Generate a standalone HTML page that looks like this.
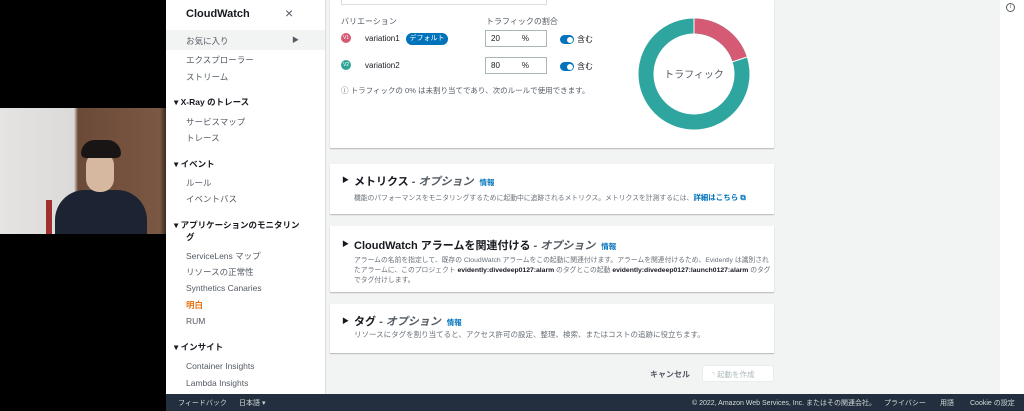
<!DOCTYPE html>
<html><head><meta charset="utf-8"><style>
*{margin:0;padding:0;box-sizing:border-box}
body{width:1024px;height:411px;overflow:hidden;position:relative;background:#000;font-family:"Liberation Sans","Noto Sans CJK JP",sans-serif;color:#16191f}
.abs{position:absolute}
.side{left:166px;top:0;width:160px;height:394px;background:#fff;border-right:1px solid #ddd}
.side div{position:absolute;left:20px;font-size:8.5px;color:#545b64;white-space:nowrap}
.side .h{left:8px;font-weight:bold;color:#16191f}
.main{left:326px;top:0;width:674px;height:394px;background:#f2f3f3}
.card{position:absolute;left:4px;width:444px;background:#fff;box-shadow:0 1px 1px rgba(0,0,0,.25)}
.t{position:absolute;font-size:8px;white-space:nowrap}
.ct{font-size:11px;font-weight:bold;left:24px}
.ct i{font-weight:bold;color:#545b64}
.info{color:#0073bb;font-size:7.5px;font-weight:bold;margin-left:6px}
.desc{font-size:6.8px;color:#687078;left:24px;line-height:10px}
.inp{position:absolute;width:62px;height:17px;border:1px solid #aab7b8;background:#fff;font-size:8px;padding:3px 5px}
.tog{position:absolute;width:14px;height:9px;border-radius:5px;background:#0073bb}
.tog:after{content:"";position:absolute;right:1.5px;top:1.5px;width:6px;height:6px;border-radius:50%;background:#fff}
.foot{left:166px;top:394px;width:858px;height:17px;background:#232f3e;color:#d5dbdb;font-size:7px}
.foot span{position:absolute;top:4px;white-space:nowrap}
</style></head><body>
<div class="abs" style="left:0;top:108px;width:166px;height:126px;background:linear-gradient(90deg,#e6e4e2 0,#dcdad8 74px,#6b4a38 78px,#7b5843 160px,#3a2a20 166px)"></div>
<div class="abs" style="left:55px;top:190px;width:92px;height:44px;background:#1c2332;border-radius:30px 30px 0 0"></div>
<div class="abs" style="left:86px;top:152px;width:28px;height:40px;background:#d6b7a0;border-radius:13px"></div>
<div class="abs" style="left:81px;top:140px;width:40px;height:18px;background:#1a1515;border-radius:18px 18px 6px 6px"></div>
<div class="abs" style="left:46px;top:200px;width:6px;height:34px;background:#a03030"></div>
<div class="abs side">
<div class="h" style="left:20px;top:8px;font-size:11px">CloudWatch</div>
<div style="left:119px;top:5px;font-size:14px;color:#545b64">×</div>
<div style="left:0;top:30px;width:159px;height:20px;background:#f2f3f3"></div>
<div style="top:35px">お気に入り</div><div style="left:126px;top:35px;font-size:7px">▶</div>
<div style="top:54px">エクスプローラー</div>
<div style="top:71px">ストリーム</div>
<div class="h" style="top:96px">▾ X-Ray のトレース</div>
<div style="top:116px">サービスマップ</div>
<div style="top:132px">トレース</div>
<div class="h" style="top:158px">▾ イベント</div>
<div style="top:177px">ルール</div>
<div style="top:193px">イベントバス</div>
<div class="h" style="top:219px">▾ アプリケーションのモニタリン</div>
<div class="h" style="left:20px;top:231px">グ</div>
<div style="top:250px">ServiceLens マップ</div>
<div style="top:266px">リソースの正常性</div>
<div style="top:283px">Synthetics Canaries</div>
<div style="top:299px;color:#ec7211;font-weight:bold">明白</div>
<div style="top:316px">RUM</div>
<div class="h" style="top:341px">▾ インサイト</div>
<div style="top:361px">Container Insights</div>
<div style="top:378px">Lambda Insights</div>
</div>
<div class="abs main">
<div class="card" style="top:0;height:148px">
 <div class="abs" style="left:11px;top:-1px;width:206px;height:6px;border:1px solid #ddd;border-top:0"></div>
 <div class="t" style="left:11px;top:16px;color:#545b64">バリエーション</div>
 <div class="t" style="left:156px;top:16px;color:#545b64">トラフィックの割合</div>
 <div class="abs" style="left:11px;top:33px;width:10px;height:10px;border-radius:50%;background:#d45b73;color:#fff;font-size:5px;text-align:center;line-height:10px">V1</div>
 <div class="t" style="left:35px;top:34px">variation1</div>
 <div class="abs" style="left:76px;top:33px;width:42px;height:12px;border-radius:6px;background:#0073bb;color:#fff;font-size:7px;text-align:center;line-height:12px">デフォルト</div>
 <div class="inp" style="left:155px;top:30px">20<span style="margin-left:22px">%</span></div>
 <div class="tog" style="left:230px;top:35px"></div><div class="t" style="left:247px;top:34px">含む</div>
 <div class="abs" style="left:11px;top:60px;width:10px;height:10px;border-radius:50%;background:#2ea597;color:#fff;font-size:5px;text-align:center;line-height:10px">V2</div>
 <div class="t" style="left:35px;top:61px">variation2</div>
 <div class="inp" style="left:155px;top:57px">80<span style="margin-left:22px">%</span></div>
 <div class="tog" style="left:230px;top:62px"></div><div class="t" style="left:247px;top:61px">含む</div>
 <div class="t" style="left:11px;top:85px;color:#545b64;font-size:7.5px">ⓘ トラフィックの 0% は未割り当てであり、次のルールで使用できます。</div>
 <svg class="abs" style="left:308px;top:18px" width="112" height="112" viewBox="0 0 112 112">
  <circle cx="56" cy="56" r="48" fill="none" stroke="#2ea59f" stroke-width="15"/>
  <path d="M56 8 A48 48 0 0 1 101.65 41.17" fill="none" stroke="#d45b73" stroke-width="15"/>
  <line x1="56" y1="0" x2="56" y2="16" stroke="#fff" stroke-width="1"/>
  <line x1="109" y1="39" x2="94" y2="44" stroke="#fff" stroke-width="1"/>
  <text x="56" y="60" text-anchor="middle" font-size="10" fill="#545b64" font-family="Liberation Sans,Noto Sans CJK JP,sans-serif">トラフィック</text>
 </svg>
</div>
<div class="card" style="top:164px;height:50px">
 <div class="t" style="left:12px;top:11px;font-size:7px">▶</div>
 <div class="t ct" style="top:9px">メトリクス <i>- オプション</i><span class="info">情報</span></div>
 <div class="t desc" style="top:29px">機能のパフォーマンスをモニタリングするために起動中に追跡されるメトリクス。メトリクスを計測するには、<span style="color:#0073bb;font-weight:bold;font-size:7.5px">詳細はこちら ⧉</span></div>
</div>
<div class="card" style="top:226px;height:66px">
 <div class="t" style="left:12px;top:13px;font-size:7px">▶</div>
 <div class="t ct" style="top:11px">CloudWatch アラームを関連付ける <i>- オプション</i><span class="info">情報</span></div>
 <div class="t desc" style="top:30px">アラームの名前を指定して、既存の CloudWatch アラームをこの起動に関連付けます。アラームを関連付けるため、Evidently は識別され<br>たアラームに、このプロジェクト <b style="color:#16191f">evidently:divedeep0127:alarm</b> のタグとこの起動 <b style="color:#16191f">evidently:divedeep0127:launch0127:alarm</b> のタグ<br>でタグ付けします。</div>
</div>
<div class="card" style="top:304px;height:49px">
 <div class="t" style="left:12px;top:12px;font-size:7px">▶</div>
 <div class="t ct" style="top:9px">タグ <i>- オプション</i><span class="info">情報</span></div>
 <div class="t desc" style="top:26px;font-size:7.5px">リソースにタグを割り当てると、アクセス許可の設定、整理、検索、またはコストの追跡に役立ちます。</div>
</div>
<div class="t" style="left:324px;top:369px;font-weight:bold;color:#545b64">キャンセル</div>
<div class="abs" style="left:376px;top:365px;width:72px;height:17px;background:#fff;border:1px solid #eaeded;font-size:7.5px;color:#aab7b8;padding:3px 0 0 9px">◝ 起動を作成</div>
</div>
<div class="abs" style="left:1000px;top:0;width:24px;height:394px;background:#fff"></div>
<div class="abs" style="left:1006px;top:3px;width:9px;height:9px;border:1px solid #545b64;border-radius:50%;font-size:6px;text-align:center;line-height:7px;color:#545b64">i</div>
<div class="abs foot">
<span style="left:12px">フィードバック</span><span style="left:73px">日本語 ▾</span>
<span style="left:526px">© 2022, Amazon Web Services, Inc. またはその関連会社。</span>
<span style="left:718px">プライバシー</span><span style="left:774px">用語</span><span style="left:804px">Cookie の設定</span>
</div>
</body></html>
